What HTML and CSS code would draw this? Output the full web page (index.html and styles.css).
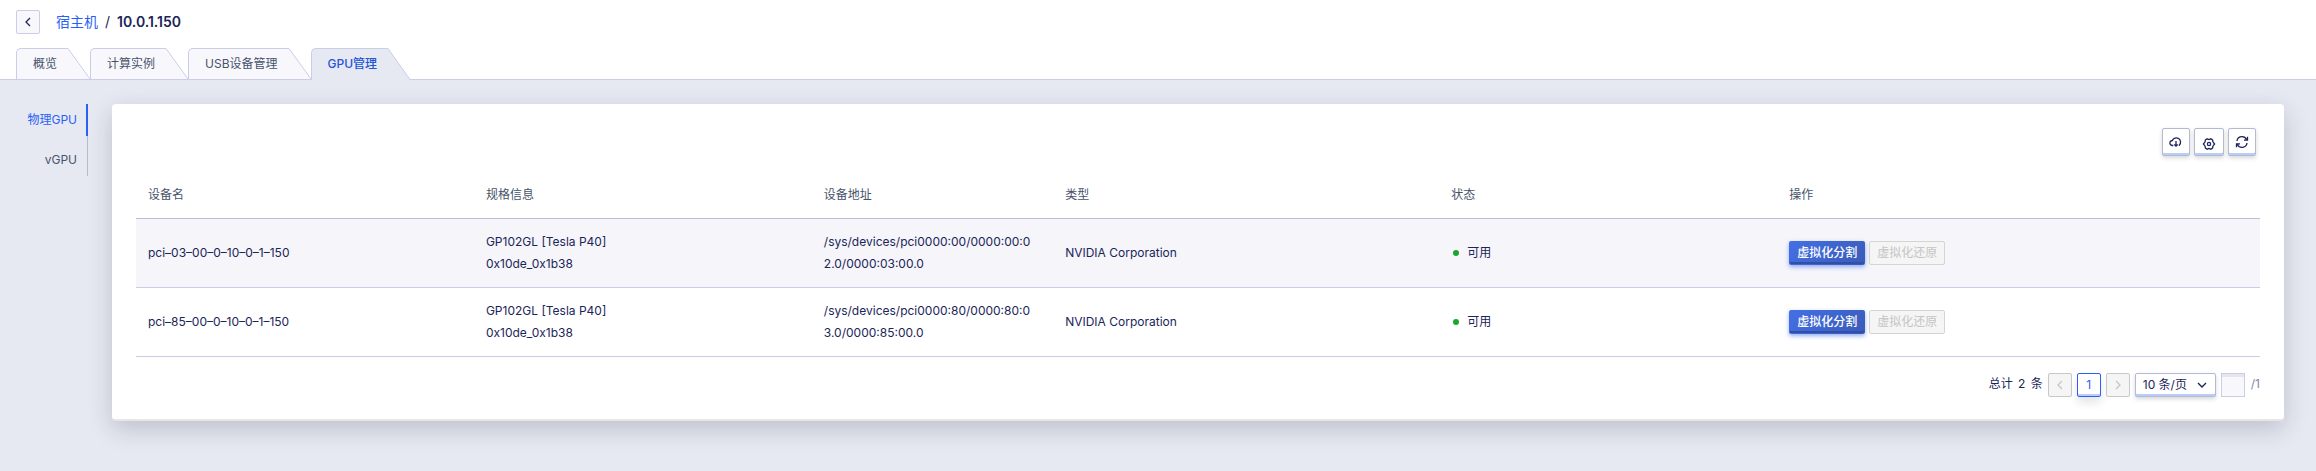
FILE: index.html
```html
<!DOCTYPE html>
<html lang="zh-CN">
<head>
<meta charset="utf-8">
<title>宿主机 / 10.0.1.150</title>
<link rel="stylesheet" href="styles.css">
</head>
<body>
<header class="page-header">
  <button class="back" type="button" aria-label="返回">
    <svg width="8" height="10" viewBox="0 0 8 10" fill="none" stroke="currentColor" stroke-width="1.3"><path d="M6 1 2 5l4 4"/></svg>
  </button>
  <nav class="breadcrumb"><a href="#">宿主机</a><span class="sep">/</span><strong>10.0.1.150</strong></nav>
</header>
<nav class="tabs">
  <button class="tab" type="button"><span class="tab-label">概览</span><svg class="tab-edge" viewBox="0 0 22 31"><path class="fill" d="M0 0 22 31H0z"/><path class="line" d="M0 .5 22 31"/></svg></button>
  <button class="tab" type="button"><span class="tab-label">计算实例</span><svg class="tab-edge" viewBox="0 0 22 31"><path class="fill" d="M0 0 22 31H0z"/><path class="line" d="M0 .5 22 31"/></svg></button>
  <button class="tab" type="button"><span class="tab-label">USB设备管理</span><svg class="tab-edge" viewBox="0 0 22 31"><path class="fill" d="M0 0 22 31H0z"/><path class="line" d="M0 .5 22 31"/></svg></button>
  <button class="tab active" type="button"><span class="tab-label">GPU管理</span><svg class="tab-edge" viewBox="0 0 22 32"><path class="fill" d="M0 0 22 32H0z"/><path class="line" d="M0 .5 22 31.5"/></svg></button>
</nav>
<div class="content">
  <nav class="side">
    <a class="side-item active" href="#">物理GPU</a>
    <a class="side-item" href="#">vGPU</a>
  </nav>
  <main class="card">
    <div class="toolbar">
      <button class="tool" type="button" aria-label="下载">
        <svg width="14" height="14" viewBox="0 0 14 14"><path d="M4.300 10.500H3.500A2.500 2.500 0 0 1 3.300 5.500 4.300 4.300 0 1 1 10.300 10.200L9.700 10.400M7 6v5M5.300 9.500 7 11.200 8.700 9.500"/></svg>
      </button>
      <button class="tool wide" type="button" aria-label="设置">
        <svg width="14" height="14" viewBox="0 0 14 14"><path d="M5.200 1.800 7 2.500 8.800 1.800 10.600 2.900 10.900 4.800 12.600 7 10.900 9.200 10.600 11.100 8.800 12.200 7 11.500 5.200 12.200 3.400 11.100 3.100 9.200 1.400 7 3.100 4.800 3.400 2.900z"/><circle cx="7" cy="7" r="1.600"/></svg>
      </button>
      <button class="tool" type="button" aria-label="刷新">
        <svg width="14" height="14" viewBox="0 0 14 14"><path d="M2 6A5 5 0 0 1 11.500 4.500M12.500 1.800V5.200H9M12 8A5 5 0 0 1 2.500 9.500M1.500 12.200V8.800H5"/></svg>
      </button>
    </div>
    <table class="grid">
      <colgroup><col class="c14"><col class="c14"><col class="c10"><col class="c16"><col class="c14"><col class="c20"></colgroup>
      <thead><tr><th>设备名</th><th>规格信息</th><th>设备地址</th><th>类型</th><th>状态</th><th>操作</th></tr></thead>
      <tbody>
        <tr class="hover">
          <td>pci–03–00–0–10–0–1–150</td><td>GP102GL [Tesla P40]<br>0x10de_0x1b38</td><td>/sys/devices/pci0000:00/0000:00:02.0/0000:03:00.0</td><td>NVIDIA Corporation</td><td><span class="status">可用</span></td>
          <td><div class="actions"><button class="btn primary" type="button">虚拟化分割</button><button class="btn" type="button" disabled>虚拟化还原</button></div></td>
        </tr>
        <tr>
          <td>pci–85–00–0–10–0–1–150</td><td>GP102GL [Tesla P40]<br>0x10de_0x1b38</td><td>/sys/devices/pci0000:80/0000:80:03.0/0000:85:00.0</td><td>NVIDIA Corporation</td><td><span class="status">可用</span></td>
          <td><div class="actions"><button class="btn primary" type="button">虚拟化分割</button><button class="btn" type="button" disabled>虚拟化还原</button></div></td>
        </tr>
      </tbody>
    </table>
    <div class="pager">
      <span class="total">总计 <b>2</b> 条</span>
      <button class="page" type="button" disabled aria-label="上一页"><svg width="8" height="10" viewBox="0 0 8 10"><path d="M6 1 2 5l4 4"/></svg></button>
      <button class="page current" type="button">1</button>
      <button class="page" type="button" disabled aria-label="下一页"><svg width="8" height="10" viewBox="0 0 8 10"><path d="M2 1l4 4-4 4"/></svg></button>
      <span class="size"><select aria-label="每页条数"><option>10 条/页</option></select><svg class="caret" width="10" height="8" viewBox="0 0 10 8"><path d="M1 2l4 4 4-4"/></svg></span>
      <label class="jump"><input type="text" aria-label="跳至页"><span>/1</span></label>
    </div>
  </main>
</div>
</body>
</html>
```
FILE: styles.css
```css
* { box-sizing: border-box; }
body {
  margin: 0;
  min-height: 100vh;
  display: flex;
  flex-direction: column;
  background: #fff;
  color: #1b2559;
  font: 12px/22px Inter, "Noto Sans CJK SC", sans-serif;
}
button, select, input { font: inherit; color: inherit; margin: 0; }
button { padding: 0; }
a { color: #2b5ff6; text-decoration: none; }
svg { display: block; }

.page-header { display: flex; align-items: center; gap: 16px; padding: 10px 16px 0; }
.back {
  width: 24px; height: 24px;
  display: grid; place-items: center;
  background: #f8f8fc; border: 1px solid #cbcde8; border-radius: 2px; color: #1b2559;
}
.breadcrumb { display: flex; font-size: 14px; line-height: 24px; }
.breadcrumb .sep { margin: 0 7px; color: #1b2559; }
.breadcrumb strong { font-weight: 600; }

.tabs { display: flex; height: 46px; padding: 14px 16px 0; border-bottom: 1px solid #cbcde8; }
.tab { display: flex; height: 32px; border: 0; background: none; color: #47536b; }
.tab-label {
  height: 31px; padding: 0 11px 0 16px; line-height: 29px;
  border: solid #cbcde8; border-width: 1px 0 0 1px; border-radius: 5px 0 0;
  background: #f8f8fc;
}
.tab-edge { width: 22px; height: 31px; }
.tab-edge .fill { fill: #f8f8fc; }
.tab-edge .line { fill: none; stroke: #cbcde8; }
.tab.active { color: #2454d8; }
.tab.active .tab-label { height: 32px; background: #e6e9f2; font-weight: 500; }
.tab.active .tab-edge { height: 32px; }
.tab.active .fill { fill: #e6e9f2; }

.content { flex: 1; display: flex; align-items: flex-start; gap: 24px; padding: 24px 32px 50px 0; background: #e6e9f2; }
.side {
  width: 88px; height: 72px;
  display: flex; flex-direction: column; gap: 8px;
  background: linear-gradient(#b4b9cc, #b4b9cc) right / 1px 100% no-repeat;
}
.side-item { height: 32px; line-height: 32px; padding-right: 9px; border-right: 2px solid transparent; text-align: right; color: #47536b; }
.side-item.active { color: #2b5ff6; border-color: #2b5ff6; }

.card {
  flex: 1; min-width: 0; padding: 24px 24px 22px;
  background: #fff; border-bottom: 2px solid #e6e6e6; border-radius: 4px;
  box-shadow: 0 8px 24px rgba(30, 30, 50, .2);
}
.toolbar { display: flex; justify-content: flex-end; gap: 4px; margin: 0 4px 16px 0; }
.tool {
  width: 28px; height: 28px;
  display: grid; place-items: center; padding-bottom: 1px;
  background: #fff; border: 1px solid #b4b9d4; border-radius: 2px;
  box-shadow: inset 0 -2px #b9cdf8, 0 2px 4px rgba(0, 0, 0, .16);
}
.tool.wide { width: 30px; padding: 3px 0 0; }
.tool path, .tool circle { fill: none; stroke: #1b2559; stroke-width: 1.300; }

.grid { width: 100%; table-layout: fixed; border-collapse: separate; border-spacing: 0; }
.c10 { width: 10%; } .c14 { width: 14%; } .c16 { width: 16%; } .c20 { width: 20%; }
.grid th, .grid td { padding: 12px 20px 12px 12px; text-align: left; border-bottom: 1px solid #cbcde8; word-break: break-all; }
.grid th { font-weight: 400; color: #47536b; border-color: #b8bfd6; }
.hover td { background: #f5f5fa; }
.status { display: flex; align-items: center; gap: 8px; padding-left: 2px; }
.status::before { content: ""; width: 6px; height: 6px; border-radius: 50%; background: #17a62e; }
.actions { display: flex; gap: 4px; }
.btn {
  height: 24px; padding: 0 7px; line-height: 22px;
  border: 1px solid #d4d4d4; border-radius: 2px; background: #f5f5f5; color: #c4c4c4;
}
.btn.primary {
  border-color: transparent; color: #fff; font-weight: 500;
  background: linear-gradient(135deg, #4470e6, #3a5bb8) border-box;
  box-shadow: inset 0 -2px #324fa6, 0 2px 4px rgba(43, 95, 246, .5);
}

.pager { display: flex; justify-content: flex-end; gap: 5px; margin-top: 16px; line-height: 22px; }
.total b { margin: 0 2px; font-weight: 400; }
.page {
  width: 24px; height: 24px;
  display: grid; place-items: center;
  border: 1px solid #c8c8c8; border-radius: 2px; background: #f5f5f5;
}
.page path { fill: none; stroke: #c4c4c4; stroke-width: 1.200; }
.page.current { background: #fff; color: #2b5ff6; border-color: #2b5ff6; box-shadow: inset 0 -2px #b9cdf8, 0 6px 10px rgba(0, 0, 0, .1); }
.size { position: relative; }
.size select {
  display: block; width: 81px; height: 24px; padding: 0 7px;
  appearance: none; background: #fff; border: 1px solid #b4b9d4; border-radius: 2px;
  box-shadow: inset 0 -2px #b9cdf8, 0 2px 4px rgba(0, 0, 0, .16);
}
.caret { position: absolute; right: 9px; top: 8px; }
.caret path { fill: none; stroke: #1b2559; stroke-width: 1.400; }
.jump { display: flex; gap: 6px; color: #7c88a8; }
.jump input { width: 24px; height: 24px; padding: 0; border: 1px solid #cbcde8; background: #f8f8fc; box-shadow: inset 0 3px #e6e6ea; }
```
